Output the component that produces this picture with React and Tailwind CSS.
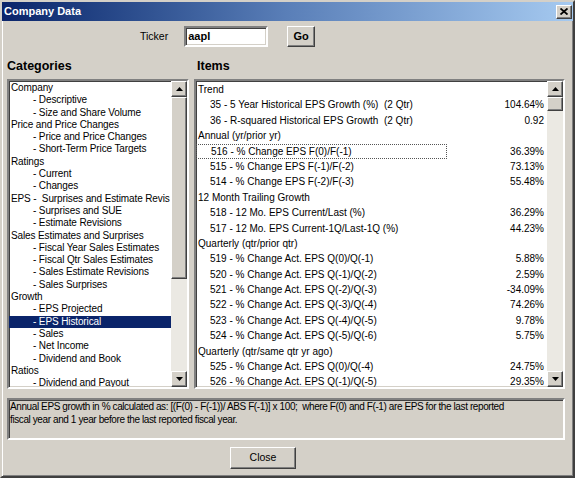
import React from "react";

const categories = [
  { t: "Company" },
  { t: "- Descriptive", s: 1 },
  { t: "- Size and Share Volume", s: 1 },
  { t: "Price and Price Changes" },
  { t: "- Price and Price Changes", s: 1 },
  { t: "- Short-Term Price Targets", s: 1 },
  { t: "Ratings" },
  { t: "- Current", s: 1 },
  { t: "- Changes", s: 1 },
  { t: "EPS -  Surprises and Estimate Revis" },
  { t: "- Surprises and SUE", s: 1 },
  { t: "- Estimate Revisions", s: 1 },
  { t: "Sales Estimates and Surprises" },
  { t: "- Fiscal Year Sales Estimates", s: 1 },
  { t: "- Fiscal Qtr Sales Estimates", s: 1 },
  { t: "- Sales Estimate Revisions", s: 1 },
  { t: "- Sales Surprises", s: 1 },
  { t: "Growth" },
  { t: "- EPS Projected", s: 1 },
  { t: "- EPS Historical", s: 1, sel: 1 },
  { t: "- Sales", s: 1 },
  { t: "- Net Income", s: 1 },
  { t: "- Dividend and Book", s: 1 },
  { t: "Ratios" },
  { t: "- Dividend and Payout", s: 1 },
];

const items = [
  { h: "Trend" },
  { t: "35 - 5 Year Historical EPS Growth (%)  (2 Qtr)", v: "104.64%" },
  { t: "36 - R-squared Historical EPS Growth  (2 Qtr)", v: "0.92" },
  { h: "Annual (yr/prior yr)" },
  { t: "516 - % Change EPS F(0)/F(-1)", v: "36.39%", focus: 1 },
  { t: "515 - % Change EPS F(-1)/F(-2)", v: "73.13%" },
  { t: "514 - % Change EPS F(-2)/F(-3)", v: "55.48%" },
  { h: "12 Month Trailing Growth" },
  { t: "518 - 12 Mo. EPS Current/Last (%)", v: "36.29%" },
  { t: "517 - 12 Mo. EPS Current-1Q/Last-1Q (%)", v: "44.23%" },
  { h: "Quarterly (qtr/prior qtr)" },
  { t: "519 - % Change Act. EPS Q(0)/Q(-1)", v: "5.88%" },
  { t: "520 - % Change Act. EPS Q(-1)/Q(-2)", v: "2.59%" },
  { t: "521 - % Change Act. EPS Q(-2)/Q(-3)", v: "-34.09%" },
  { t: "522 - % Change Act. EPS Q(-3)/Q(-4)", v: "74.26%" },
  { t: "523 - % Change Act. EPS Q(-4)/Q(-5)", v: "9.78%" },
  { t: "524 - % Change Act. EPS Q(-5)/Q(-6)", v: "5.75%" },
  { h: "Quarterly (qtr/same qtr yr ago)" },
  { t: "525 - % Change Act. EPS Q(0)/Q(-4)", v: "24.75%" },
  { t: "526 - % Change Act. EPS Q(-1)/Q(-5)", v: "29.35%" },
];

const raised =
  "bg-[#d4d0c8] border border-t-white border-l-white border-r-[#404040] border-b-[#404040] shadow-[inset_-1px_-1px_0_#808080]";
const sunken =
  "border-2 border-t-[#808080] border-l-[#808080] border-r-white border-b-white shadow-[inset_1px_1px_0_#404040,inset_-1px_-1px_0_#d4d0c8]";

function Arrow({ down }) {
  return (
    <svg width="7" height="4" viewBox="0 0 7 4">
      {down ? (
        <polygon points="0,0 7,0 3.5,4" fill="#000" />
      ) : (
        <polygon points="0,4 7,4 3.5,0" fill="#000" />
      )}
    </svg>
  );
}

function ScrollBar({ thumbH }) {
  return (
    <div className="w-[16px] h-full flex flex-col bg-[#ebe9e3] shrink-0">
      <div className={`${raised} h-[16px] flex items-center justify-center`}>
        <Arrow />
      </div>
      <div className="flex-1 flex flex-col">
        <div className={raised} style={{ height: thumbH }} />
      </div>
      <div className={`${raised} h-[16px] flex items-center justify-center`}>
        <Arrow down />
      </div>
    </div>
  );
}

export default function App() {
  return (
    <div className="w-[575px] h-[478px] bg-[#d4d0c8] font-['Liberation_Sans',Arial,sans-serif] text-black overflow-hidden">
      <div className="w-full h-full flex flex-col border-2 border-t-[#d4d0c8] border-l-[#d4d0c8] border-r-[#404040] border-b-[#404040] shadow-[inset_1px_1px_0_#fff,inset_-1px_-1px_0_#808080]">
        {/* Title bar */}
        <div className="h-[19px] bg-gradient-to-r from-[#0a246a] via-[#5a7fb8] to-[#a6caf0] flex items-center justify-between pl-[2px] pr-[1px]">
          <span className="text-white font-bold text-[11px] leading-none">Company Data</span>
          <div className={`${raised} w-[16px] h-[14px] flex items-center justify-center`}>
            <svg width="8" height="7" viewBox="0 0 8 7">
              <path d="M0.5 0.5 L7.5 6.5 M7.5 0.5 L0.5 6.5" stroke="#000" strokeWidth="1.8" />
            </svg>
          </div>
        </div>

        {/* Ticker row */}
        <div className="mt-[5px] h-[21px] flex items-center">
          <span className="ml-[138px] text-[10.5px]">Ticker</span>
          <div className={`ml-[16px] w-[84px] h-[21px] bg-white ${sunken} flex items-center pl-[2px]`}>
            <span className="font-bold text-[11px]">aapl</span>
          </div>
          <div className={`ml-[19px] w-[28px] h-[21px] ${raised} flex items-center justify-center`}>
            <span className="font-bold text-[11px]">Go</span>
          </div>
        </div>

        {/* Labels */}
        <div className="mt-[12px] h-[15px] flex items-center text-[12.5px] font-bold">
          <span className="ml-[5px] w-[190px]">Categories</span>
          <span>Items</span>
        </div>

        {/* Lists */}
        <div className="mt-[5px] h-[310px] flex pl-[5px] gap-[5px]">
          <div className={`w-[182px] h-full bg-white ${sunken} flex overflow-hidden`}>
            <div className="flex-1 overflow-hidden text-[10px] tracking-[-0.12px] pt-[1px]">
              {categories.map((c, i) => (
                <div
                  key={i}
                  className={`h-[12.3px] leading-[12.3px] whitespace-pre overflow-hidden ${
                    c.s ? "pl-[24px]" : "pl-[2px]"
                  } ${c.sel ? "bg-[#0a246a] text-white" : ""}`}
                >
                  {c.t}
                </div>
              ))}
            </div>
            <ScrollBar thumbH={182} />
          </div>

          <div className={`w-[371px] h-full bg-white ${sunken} flex overflow-hidden`}>
            <div className="flex-1 overflow-hidden text-[10px] pt-[1px]">
              {items.map((it, i) =>
                it.h ? (
                  <div key={i} className="h-[15.4px] leading-[15.4px] pl-[2px] whitespace-pre">
                    {it.h}
                  </div>
                ) : (
                  <div key={i} className="h-[15.4px] leading-[15.4px] flex whitespace-pre">
                    <div
                      className={`pl-[14px] ${
                        it.focus ? "w-[251px] border border-dotted border-[#555] pl-[13px] leading-[13.4px]" : ""
                      }`}
                    >
                      {it.t}
                    </div>
                    <div className="flex-1 text-right pr-[3px]">{it.v}</div>
                  </div>
                )
              )}
            </div>
            <ScrollBar thumbH={14} />
          </div>
        </div>

        {/* Description */}
        <div className={`mt-[9px] ml-[5px] w-[558px] h-[42px] ${sunken} px-[1px] pt-[1px] text-[10px] tracking-[-0.4px] leading-[12.5px]`}>
          Annual EPS growth in % calculated as: [(F(0) - F(-1))/ ABS F(-1)] x 100;&nbsp; where F(0) and F(-1) are EPS for the last reported
          <br />
          fiscal year and 1 year before the last reported fiscal year.
        </div>

        {/* Close */}
        <div className="mt-[7px] flex">
          <div className={`ml-[228px] w-[66px] h-[22px] ${raised} flex items-center justify-center text-[10.5px]`}>
            Close
          </div>
        </div>
      </div>
    </div>
  );
}
